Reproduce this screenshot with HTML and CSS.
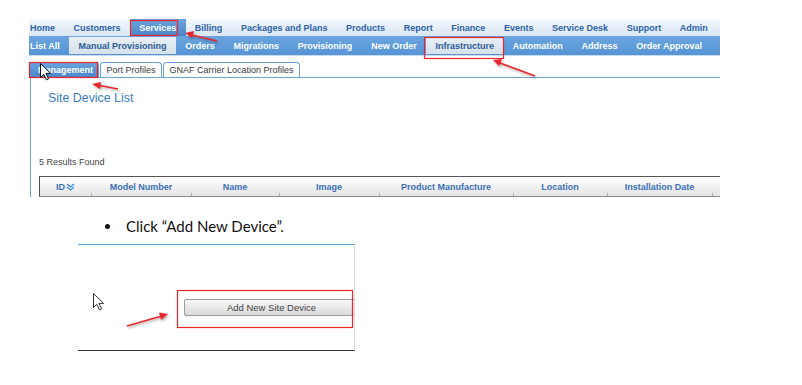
FILE: index.html
```html
<!DOCTYPE html>
<html>
<head>
<meta charset="utf-8">
<link rel="stylesheet" href="styles.css">
</head>
<body>
<div class="page">
  <div class="shot1">
    <div class="nav1">
      <span class="n1 first">Home</span>
      <span class="n1">Customers</span>
      <span class="n1 active">Services</span>
      <span class="n1">Billing</span>
      <span class="n1">Packages and Plans</span>
      <span class="n1">Products</span>
      <span class="n1">Report</span>
      <span class="n1">Finance</span>
      <span class="n1">Events</span>
      <span class="n1">Service Desk</span>
      <span class="n1">Support</span>
      <span class="n1">Admin</span>
    </div>
    <div class="nav2">
      <span class="n2 first">List All</span>
      <span class="n2 sel">Manual Provisioning</span>
      <span class="n2">Orders</span>
      <span class="n2">Migrations</span>
      <span class="n2">Provisioning</span>
      <span class="n2">New Order</span>
      <span class="n2 sel mark">Infrastructure</span>
      <span class="n2">Automation</span>
      <span class="n2">Address</span>
      <span class="n2">Order Approval</span>
    </div>
    <div class="tabs">
      <span class="tab on">Management</span>
      <span class="tab">Port Profiles</span>
      <span class="tab">GNAF Carrier Location Profiles</span>
    </div>
    <div class="panel">
      <div class="title">Site Device List</div>
      <div class="results">5 Results Found</div>
      <div class="thead">
        <div class="th c1">ID<svg class="sort" width="9" height="8" viewBox="0 0 9 8"><path d="M1 1l3.5 3 3.5-3M1 4l3.5 3 3.5-3" fill="none" stroke="#3a8be0" stroke-width="1.3"/></svg></div>
        <div class="th c2">Model Number</div>
        <div class="th c3">Name</div>
        <div class="th c4">Image</div>
        <div class="th c5">Product Manufacture</div>
        <div class="th c6">Location</div>
        <div class="th c7">Installation Date</div>
        <div class="th c8"></div>
      </div>
    </div>
  </div>

  <ul class="steps">
    <li>Click “Add New Device”.</li>
  </ul>

  <div class="shot2">
    <div class="btnrow">
      <span class="btn">Add New Site Device</span>
    </div>
  </div>

  <svg class="overlay" width="802" height="385" viewBox="0 0 802 385">
    <defs>
      <filter id="sh" x="-20%" y="-50%" width="140%" height="200%">
        <feDropShadow dx="1" dy="1.5" stdDeviation="1" flood-color="#000" flood-opacity="0.35"/>
      </filter>
    </defs>
    <rect x="130.5" y="20.5" width="47" height="15" fill="none" stroke="#e8262b" stroke-width="1.2"/>
    <rect x="424.5" y="37.5" width="79" height="21" fill="none" stroke="#e8262b" stroke-width="1.2"/>
    <rect x="29.5" y="62.5" width="68" height="15" fill="none" stroke="#e8262b" stroke-width="1.2"/>
    <rect x="177.5" y="290.5" width="175" height="37" fill="none" stroke="#e8262b" stroke-width="1.2"/>
    <g filter="url(#sh)" fill="#e8262b" stroke="#e8262b">
      <line x1="217" y1="41" x2="192" y2="35" stroke-width="1.6"/>
      <polygon points="185,33 194,31 192,38" stroke="none"/>
      <line x1="535" y1="76" x2="500" y2="63" stroke-width="1.6"/>
      <polygon points="493,60 502,59 499,66" stroke="none"/>
      <line x1="118" y1="89" x2="100" y2="85.5" stroke-width="1.6"/>
      <polygon points="92,84 101,82 100,89" stroke="none"/>
      <line x1="127" y1="326" x2="160" y2="316.5" stroke-width="1.8"/>
      <polygon points="168,314 159,312.5 161,320" stroke="none"/>
    </g>
    <path d="M40.5 63.5v14l3.3-3.2 2.6 5.6 2.2-1-2.6-5.5h4.6z" fill="#fff" stroke="#111" stroke-width="1"/>
    <path d="M93.5 293.5v14l3.3-3.2 2.6 5.6 2.2-1-2.6-5.5h4.6z" fill="#fff" stroke="#333" stroke-width="1"/>
  </svg>
</div>
</body>
</html>
```

FILE: styles.css
```css
html, body {
  margin: 0;
  padding: 0;
  background: #fff;
}
.page {
  position: relative;
  width: 802px;
  height: 385px;
  overflow: hidden;
  font-family: "Liberation Sans", Arial, sans-serif;
}
.shot1 {
  margin-left: 29px;
  padding-top: 19px;
  width: 691px;
  overflow: hidden;
}
.nav1 {
  display: flex;
  height: 17px;
  align-items: stretch;
  background: linear-gradient(#f4f8fc, #d9e6f3);
  white-space: nowrap;
}
.n1 {
  display: flex;
  align-items: center;
  padding: 0 9.3px;
  font-size: 9px;
  font-weight: bold;
  color: #2d62a8;
}
.n1.first { padding-left: 1px; }
.n1.active {
  background: linear-gradient(#6fa4dc, #4a86c8);
  color: #fff;
}
.nav2 {
  display: flex;
  height: 20px;
  align-items: stretch;
  background: linear-gradient(#6aa5e0, #5694d4);
  border-bottom: 1px solid #c9dcef;
  box-sizing: border-box;
  white-space: nowrap;
}
.n2 {
  display: flex;
  align-items: center;
  padding: 0 9.4px;
  font-size: 9px;
  font-weight: bold;
  color: #fff;
}
.n2.first { padding-left: 1px; }
.n2.sel {
  background: linear-gradient(#e9eff6, #d6e1ec);
  color: #2d5c98;
  margin: 1px 0;
}
.tabs {
  display: flex;
  gap: 1px;
  margin-top: 6px;
  height: 15px;
  align-items: stretch;
}
.tab {
  display: flex;
  align-items: center;
  padding: 0 5.5px;
  border: 1px solid #6d9fd6;
  border-bottom: none;
  border-radius: 4px 4px 0 0;
  font-size: 9px;
  color: #3a3a3a;
  background: #fff;
}
.tab.on {
  background: linear-gradient(#6aa3de, #4c88c9);
  color: #fff;
  font-weight: bold;
  padding: 0 5px 0 8px;
}
.panel {
  margin-left: 1px;
  border-top: 1px solid #6da3dc;
  border-left: 1px solid #6da3dc;
  height: 120px;
  box-sizing: border-box;
}
.title {
  margin: 13px 0 0 17px;
  font-size: 12.4px;
  color: #3b7cc2;
  line-height: 14px;
}
.results {
  margin: 52px 0 0 8px;
  font-size: 9px;
  color: #444;
  line-height: 11px;
}
.thead {
  display: flex;
  margin: 8px 0 0 8px;
  height: 21px;
  border-top: 1px solid #555;
  border-left: 1px solid #555;
  border-bottom: 1px solid #888;
  background: linear-gradient(#ffffff, #e4e4e4);
  box-sizing: border-box;
}
.th {
  display: flex;
  align-items: center;
  justify-content: center;
  font-size: 9px;
  font-weight: bold;
  color: #3c70b6;
  position: relative;
  flex: none;
}
.th + .th::before {
  content: "";
  position: absolute;
  left: 0;
  bottom: 0;
  height: 3px;
  border-left: 1px solid #aaa;
}
.sort { margin-left: 1px; }
.c1 { width: 51px; }
.c2 { width: 100px; }
.c3 { width: 88px; }
.c4 { width: 100px; }
.c5 { width: 134px; }
.c6 { width: 94px; }
.c7 { width: 105px; }
.c8 { width: 30px; }
.steps {
  margin: 20px 0 0 0;
  padding: 0 0 0 126px;
  font-family: Lato, "Open Sans", sans-serif;
  font-size: 15px;
  color: #111;
  line-height: 18px;
}
.steps li {
  list-style: none;
  position: relative;
}
.steps li::before {
  content: "";
  position: absolute;
  left: -21px;
  top: 7px;
  width: 5px;
  height: 5px;
  border-radius: 50%;
  background: #111;
}
.shot2 {
  margin: 9px 0 0 78px;
  width: 277px;
  height: 107px;
  border-top: 1px solid #5b9ee0;
  border-bottom: 1px solid #333;
  border-right: 1px solid #ddd;
  box-sizing: border-box;
  padding-top: 54px;
  overflow: hidden;
}
.btnrow {
  display: flex;
  padding-left: 106px;
}
.btn {
  flex: none;
  display: flex;
  align-items: center;
  justify-content: center;
  width: 175px;
  height: 17px;
  border: 1px solid #9a9a9a;
  border-radius: 2px;
  background: linear-gradient(#f8f8f8, #dadada);
  font-size: 9.5px;
  color: #444;
  box-sizing: border-box;
}
.overlay {
  position: absolute;
  left: 0;
  top: 0;
  pointer-events: none;
}
```
